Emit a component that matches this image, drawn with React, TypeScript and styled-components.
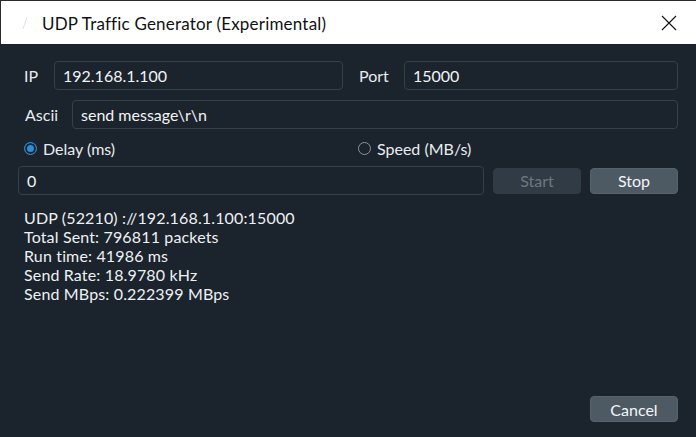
import React from "react";
import styled, { createGlobalStyle } from "styled-components";

const Global = createGlobalStyle`
  html, body { margin: 0; padding: 0; background: #1b232c; }
  #root { width: 696px; height: 437px; }
  * { box-sizing: border-box; }
`;

const Window = styled.div`
  width: 696px;
  height: 437px;
  display: flex;
  flex-direction: column;
  background: #1b232c;
  border-top: 1px solid #2b2b2b;
  font-family: "Lato", "Noto Sans", sans-serif;
  color: #e8ecef;
`;

const TitleBar = styled.div`
  height: 43px;
  background: #ffffff;
  display: flex;
  align-items: center;
  padding-left: 16px;
  border-left: 1px solid #2b2b2b;
`;

const AppIcon = styled.svg`
  width: 16px;
  height: 16px;
  margin-right: 9px;
`;

const Title = styled.div`
  font-size: 17px;
  letter-spacing: 0.2px;
  color: #111;
  flex: 1;
  padding-top: 1px;
`;

const CloseButton = styled.div`
  width: 46px;
  height: 43px;
  display: flex;
  align-items: center;
  justify-content: center;
  margin-right: 4px;
`;

const Body = styled.div`
  flex: 1;
  display: flex;
  flex-direction: column;
  padding: 17px 18px 15px 18px;
`;

const Row = styled.div<{ $mt?: number }>`
  display: flex;
  align-items: center;
  margin-top: ${(p) => p.$mt ?? 0}px;
  height: 29px;
`;

const Label = styled.span<{ $w: number; $pl?: number }>`
  font-size: 16px;
  width: ${(p) => p.$w}px;
  padding-left: ${(p) => p.$pl ?? 0}px;
  flex-shrink: 0;
`;

const Field = styled.div<{ $w?: number }>`
  height: 29px;
  border: 1px solid #354049;
  border-radius: 4px;
  background: #1b232c;
  display: flex;
  align-items: center;
  padding-left: 8px;
  font-size: 16px;
  color: #f2f4f6;
  ${(p) => (p.$w ? `width: ${p.$w}px; flex-shrink: 0;` : "flex: 1;")}
`;

const RadioRow = styled.div`
  display: flex;
  align-items: center;
  height: 22px;
  margin-top: 8px;
  padding-left: 6px;
`;

const RadioItem = styled.label<{ $w?: number }>`
  display: flex;
  align-items: center;
  font-size: 16px;
  ${(p) => (p.$w ? `width: ${p.$w}px;` : "")}
`;

const RadioDot = styled.span<{ $on?: boolean }>`
  width: 13px;
  height: 13px;
  border-radius: 50%;
  margin-right: 6px;
  border: 1px solid ${(p) => (p.$on ? "#2b8fd8" : "#8a939b")};
  background: ${(p) => (p.$on ? "#2b8fd8" : "transparent")};
  box-shadow: ${(p) => (p.$on ? "inset 0 0 0 2px #1b232c" : "none")};
  flex-shrink: 0;
`;

const Button = styled.div<{ $disabled?: boolean; $ml?: number }>`
  width: 88px;
  height: 26px;
  margin-left: ${(p) => p.$ml ?? 0}px;
  border-radius: 4px;
  display: flex;
  align-items: center;
  justify-content: center;
  font-size: 16px;
  background: ${(p) => (p.$disabled ? "#303b45" : "#4d5963")};
  color: ${(p) => (p.$disabled ? "#6d7881" : "#f4f6f8")};
  border: 1px solid ${(p) => (p.$disabled ? "#303b45" : "#56626c")};
  flex-shrink: 0;
`;

const Stats = styled.div`
  margin-top: 13px;
  padding-left: 6px;
  font-size: 16px;
  letter-spacing: 0.15px;
  line-height: 19px;
  color: #eef1f3;
`;

const Footer = styled.div`
  margin-top: auto;
  display: flex;
  justify-content: flex-end;
`;

export default function App() {
  return (
    <>
      <Global />
      <Window>
        <TitleBar>
          <AppIcon viewBox="0 0 16 16">
            <path d="M10 2 L6 14" stroke="#e4e4e4" strokeWidth="1" fill="none" />
          </AppIcon>
          <Title>UDP Traffic Generator (Experimental)</Title>
          <CloseButton>
            <svg width="16" height="16" viewBox="0 0 16 16">
              <path d="M1 1 L15 15 M15 1 L1 15" stroke="#111" strokeWidth="1.1" fill="none" />
            </svg>
          </CloseButton>
        </TitleBar>
        <Body>
          <Row>
            <Label $w={36} $pl={6}>IP</Label>
            <Field $w={289}>192.168.1.100</Field>
            <Label $w={61} $pl={16}>Port</Label>
            <Field>15000</Field>
          </Row>
          <Row $mt={10}>
            <Label $w={54} $pl={7}>Ascii</Label>
            <Field>send message\r\n</Field>
          </Row>
          <RadioRow>
            <RadioItem $w={334}>
              <RadioDot $on />
              Delay (ms)
            </RadioItem>
            <RadioItem>
              <RadioDot />
              Speed (MB/s)
            </RadioItem>
          </RadioRow>
          <Row $mt={7}>
            <Field>0</Field>
            <Button $disabled $ml={9}>Start</Button>
            <Button $ml={9}>Stop</Button>
          </Row>
          <Stats>
            <div>UDP (52210) ://192.168.1.100:15000</div>
            <div>Total Sent: 796811 packets</div>
            <div>Run time: 41986 ms</div>
            <div>Send Rate: 18.9780 kHz</div>
            <div>Send MBps: 0.222399 MBps</div>
          </Stats>
          <Footer>
            <Button>Cancel</Button>
          </Footer>
        </Body>
      </Window>
    </>
  );
}
